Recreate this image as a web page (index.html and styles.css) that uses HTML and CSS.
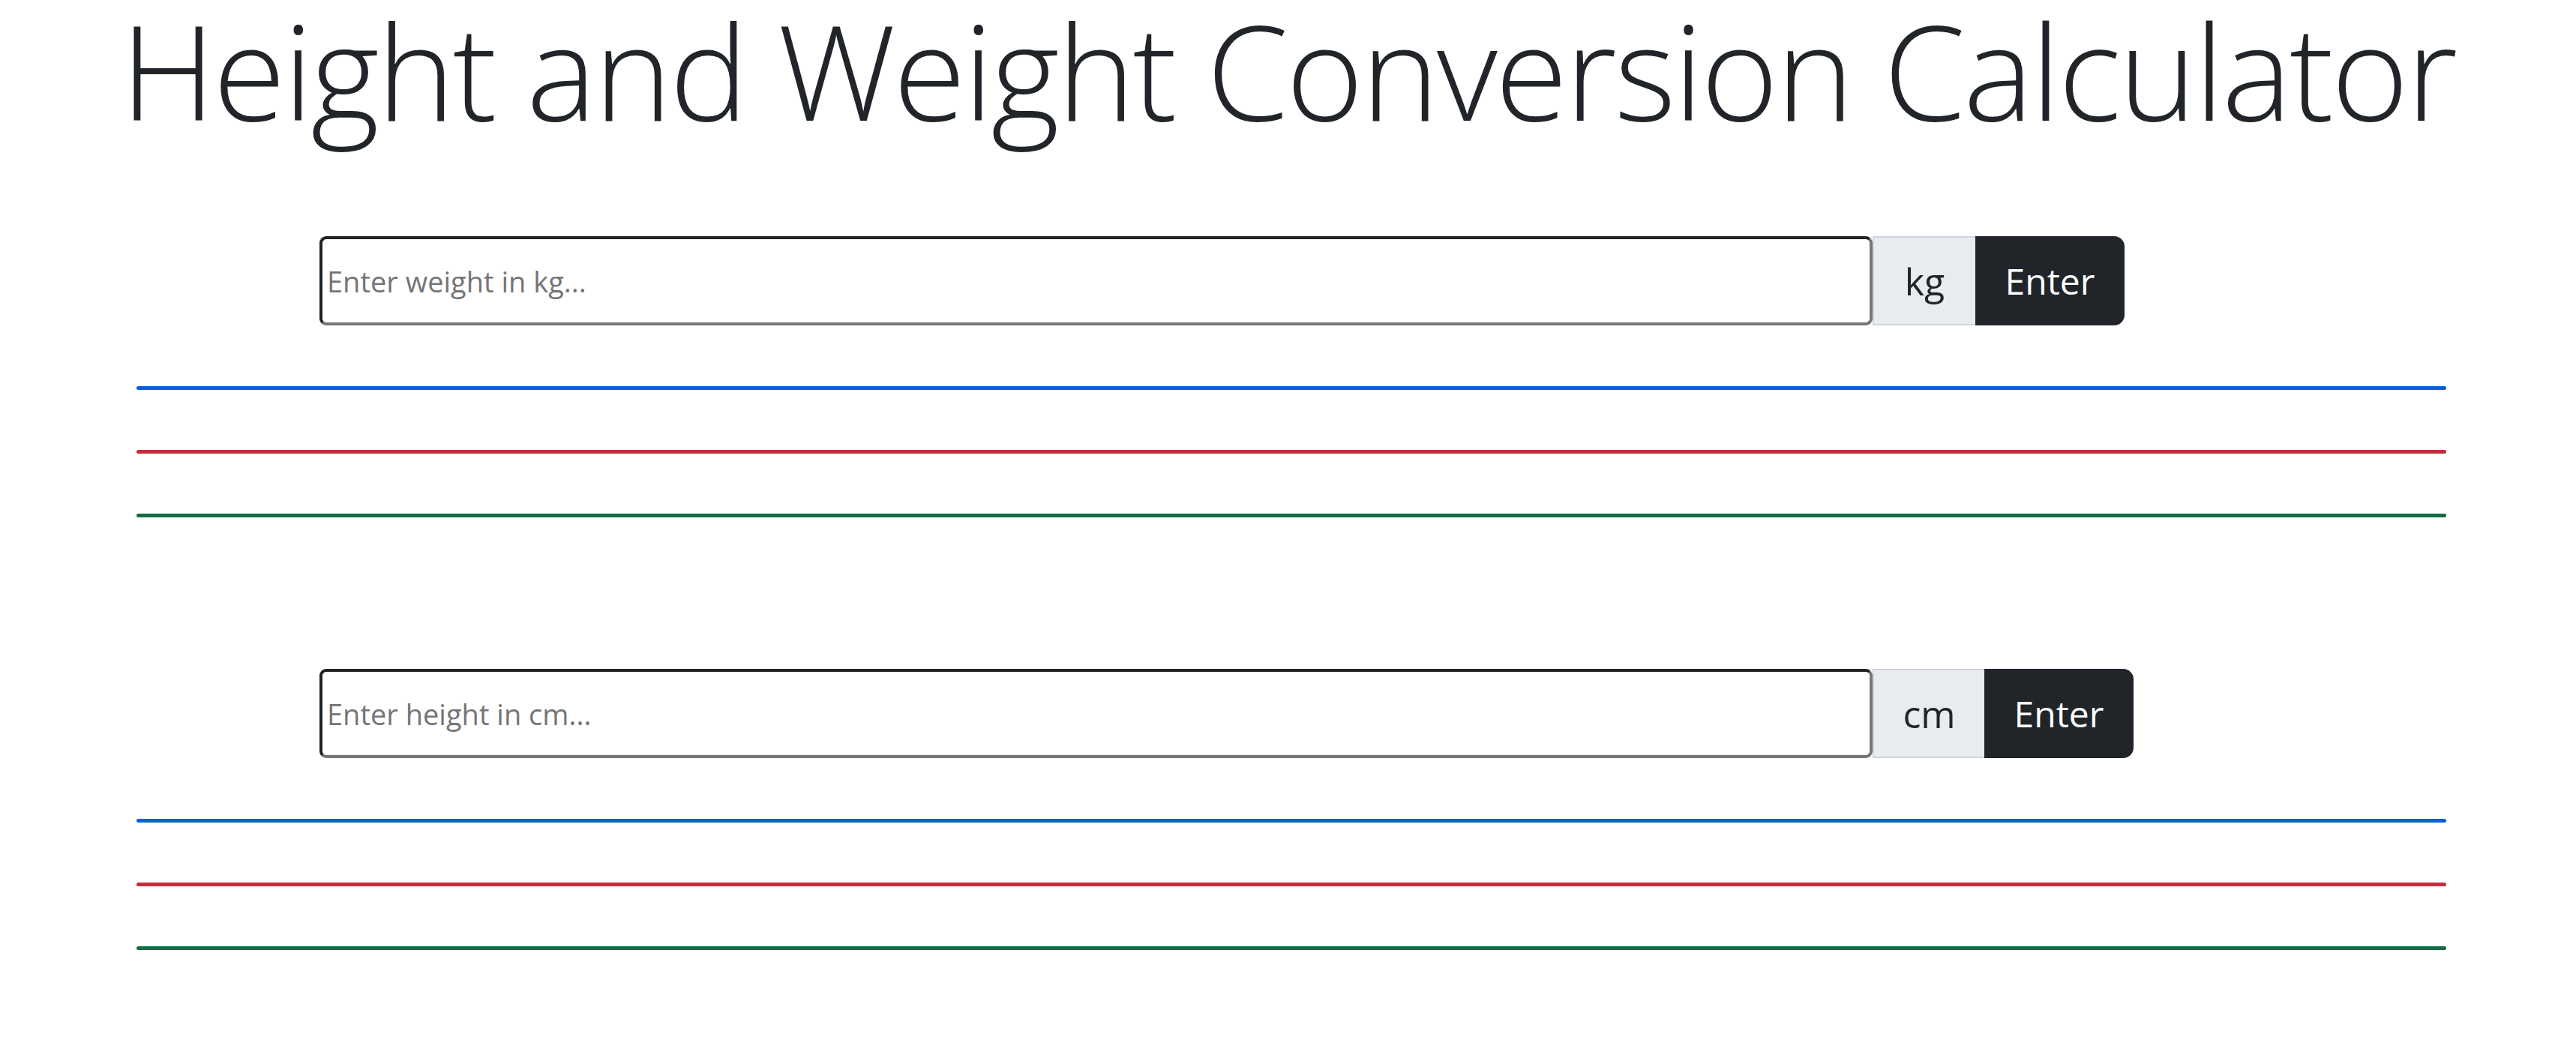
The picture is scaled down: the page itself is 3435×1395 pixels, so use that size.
FILE: index.html
```html
<!DOCTYPE html>
<html lang="en">
<head>
<meta charset="utf-8">
<title>Height and Weight Conversion Calculator</title>
<link rel="stylesheet" href="styles.css">
</head>
<body>
<main class="page">
  <h1 class="title">Height and Weight Conversion Calculator</h1>

  <section class="converter converter-weight">
    <form class="input-group">
      <input class="field" type="text" placeholder="Enter weight in kg...">
      <span class="addon addon-kg">kg</span>
      <button class="btn" type="button">Enter</button>
    </form>
    <div class="results">
      <div class="line line-blue"></div>
      <div class="line line-red"></div>
      <div class="line line-green"></div>
    </div>
  </section>

  <section class="converter converter-height">
    <form class="input-group">
      <input class="field" type="text" placeholder="Enter height in cm...">
      <span class="addon addon-cm">cm</span>
      <button class="btn" type="button">Enter</button>
    </form>
    <div class="results">
      <div class="line line-blue"></div>
      <div class="line line-red"></div>
      <div class="line line-green"></div>
    </div>
  </section>
</main>
</body>
</html>
```

FILE: styles.css
```css
html, body {
  margin: 0;
  padding: 0;
  background: #ffffff;
}

body {
  font-family: "Open Sans", "Noto Sans", "Liberation Sans", sans-serif;
  color: #212529;
}

.page {
  display: flex;
  flex-direction: column;
}

.title {
  margin: 0;
  font-size: 176px;
  font-weight: 300;
  line-height: 186px;
  text-align: center;
  color: #212529;
  letter-spacing: -3.1px;
}

.converter {
  display: flex;
  flex-direction: column;
  padding: 0 173px 0 182px;
}

.converter-weight {
  margin-top: 129px;
}

.converter-height {
  margin-top: 202px;
}

.input-group {
  display: flex;
  align-items: stretch;
  height: 119px;
  margin: 0 0 0 244px;
}

.field {
  box-sizing: border-box;
  width: 2071px;
  height: 119px;
  margin: 0;
  padding: 0 0 0 6px;
  border-style: solid;
  border-width: 4px;
  border-color: #212121 #767676 #767676 #212121;
  border-radius: 9px;
  font-family: "Open Sans", "Noto Sans", sans-serif;
  font-size: 38px;
  color: #212529;
  background: #ffffff;
  outline: none;
}

.field::placeholder {
  color: #757575;
}

.addon {
  box-sizing: border-box;
  display: flex;
  align-items: center;
  justify-content: center;
  height: 119px;
  background: #e9ecef;
  border: 2px solid #ced4da;
  border-right: none;
  font-size: 50px;
  color: #212529;
}

.addon-kg {
  width: 137px;
}

.addon-cm {
  width: 149px;
}

.btn {
  box-sizing: border-box;
  width: 199px;
  height: 119px;
  margin: 0;
  padding: 0;
  border: none;
  border-radius: 0 14px 14px 0;
  background: #212529;
  color: #ffffff;
  font-family: "Open Sans", "Noto Sans", sans-serif;
  font-size: 48px;
  cursor: pointer;
}

.results {
  display: flex;
  flex-direction: column;
  gap: 80px;
  margin-top: 81px;
}

.line {
  height: 5px;
  border-radius: 3px;
}

.line-blue {
  background: #0b5ed7;
}

.line-red {
  background: #c82b3b;
}

.line-green {
  background: #146c43;
}
```
